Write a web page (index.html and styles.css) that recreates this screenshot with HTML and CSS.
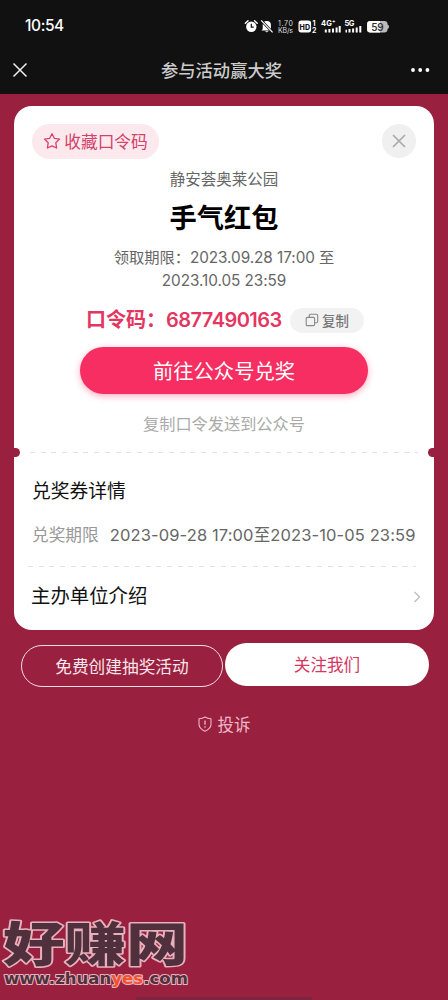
FILE: index.html
```html
<!DOCTYPE html>
<html lang="zh-CN">
<head>
<meta charset="utf-8">
<meta name="viewport" content="width=device-width, initial-scale=1">
<title>参与活动赢大奖</title>
<link rel="stylesheet" href="styles.css">
</head>
<body>
<div class="phone">
  <header class="topbar">
    <div class="status">
      <span class="clock">10:54</span>
      <svg class="status-icons" width="150" height="20" viewBox="0 0 150 20">
        <g fill="#fff">
          <circle cx="7.3" cy="10.8" r="5.2"/>
          <path d="M1.4 7.2 4 4.8M10.6 4.8l2.6 2.4" stroke="#fff" stroke-width="1.5" stroke-linecap="round"/>
          <path d="M7.3 7.8v3.3h2.4" fill="none" stroke="#111" stroke-width="1.2"/>
          <path d="M18.7 13.2V9a4.1 4.1 0 0 1 8.2 0v4.2l1.3 1.4H17.4zM21 15.2h3.6q-1.8 2-3.6 0z"/>
          <path d="M17.2 4.4 28.6 16.4" stroke="#111" stroke-width="2.6"/>
          <path d="M17.2 4.4 28.6 16.4" stroke="#fff" stroke-width="1.2"/>
          <text x="34" y="9.8" class="tiny" textLength="15">1.70</text>
          <text x="34" y="16.5" class="tiny" textLength="15">KB/s</text>
          <rect x="54.5" y="4.4" width="12.6" height="12" rx="2.6"/>
          <text x="55.6" y="13.6" class="hd" textLength="10.4" lengthAdjust="spacingAndGlyphs">HD</text>
          <text x="68.4" y="9.5" class="sim">1</text>
          <text x="68.1" y="17" class="sim">2</text>
          <text x="77" y="10" class="net" textLength="14.5">4G⁺</text>
          <text x="100.4" y="10" class="net" textLength="10">5G</text>
          <path d="M80.8 13.4h2v3h-2zM84.4 13h2v3.4h-2zM88 12.4h2v4h-2zM91.6 11.4h2v5h-2zM94.7 10h2v6.4h-2z"/>
          <path d="M101.5 13.8h1.5v2.6h-1.5zM104.5 13h2v3.4h-2zM108.1 12.4h2v4h-2zM111.7 11.4h2v5h-2zM115.3 10h2v6.4h-2z"/>
          <g transform="translate(4 0)">
            <path d="M122.3 5h14a3.2 3.2 0 0 1 3.2 3.2v.3q1.5.3 1.5 2.2t-1.5 2.2v.3a3.2 3.2 0 0 1-3.2 3.2h-14a3.2 3.2 0 0 1-3.2-3.2v-5A3.2 3.2 0 0 1 122.3 5z" fill="#bbb"/>
            <path d="M122.3 5h9.7v11.4h-9.7a3.2 3.2 0 0 1-3.2-3.2v-5A3.2 3.2 0 0 1 122.3 5z"/>
            <text x="123.2" y="14.5" class="battery" textLength="12.5">59</text>
          </g>
        </g>
      </svg>
    </div>
    <nav class="nav">
      <svg width="16" height="16" viewBox="0 0 16 16"><path d="M1.5 1.5l13 13M14.5 1.5l-13 13" stroke="#eee" stroke-width="1.5" fill="none"/></svg>
      <h1 class="nav-title">参与活动赢大奖</h1>
      <svg width="20" height="6" viewBox="0 0 20 6" fill="#fff"><circle cx="3" cy="3" r="1.9"/><circle cx="10.2" cy="3" r="1.9"/><circle cx="17.4" cy="3" r="1.9"/></svg>
    </nav>
  </header>

  <main class="page">
    <section class="card">
      <div class="card-head">
        <button class="favorite">
          <svg width="18" height="18" viewBox="0 0 18 18"><path d="M9 1.7 11.3 6.3 16.5 7.1 12.8 10.8 13.6 16 9 13.8 4.4 16 5.2 10.8 1.5 7.1 6.7 6.3z" fill="none" stroke="#d3426b" stroke-width="1.3" stroke-linejoin="round"/></svg>
          <span>收藏口令码</span>
        </button>
        <button class="close">
          <svg width="14" height="14" viewBox="0 0 14 14"><path d="M1.5 1.5l11 11M12.5 1.5l-11 11" stroke="#aaa" stroke-width="1.7" stroke-linecap="round"/></svg>
        </button>
      </div>
      <p class="merchant">静安荟奥莱公园</p>
      <h2 class="prize">手气红包</h2>
      <p class="period">领取期限：2023.09.28 17:00 至<br>2023.10.05 23:59</p>
      <div class="code-row">
        <strong class="code">口令码：<span class="code-number">6877490163</span></strong>
        <button class="copy">
          <svg width="14" height="14" viewBox="0 0 14 14" fill="none" stroke="#888" stroke-width="1.1"><rect x="1.2" y="4.4" width="8.4" height="8.2" rx="1.2"/><path d="M4.3 4.2V2.5q0-1.2 1.2-1.2h6q1.2 0 1.2 1.2v6q0 1.2-1.2 1.2H9.8"/></svg>
          <span>复制</span>
        </button>
      </div>
      <button class="redeem">前往公众号兑奖</button>
      <p class="hint">复制口令发送到公众号</p>
      <div class="tear">
        <i class="notch notch-left"></i>
        <div class="dashes"></div>
        <i class="notch notch-right"></i>
      </div>
      <h3 class="detail-title">兑奖券详情</h3>
      <div class="detail-row">
        <span class="detail-label">兑奖期限</span>
        <span class="detail-value">2023-09-28 17:00至2023-10-05 23:59</span>
      </div>
      <div class="dashes dashes-second"></div>
      <div class="organizer">
        <h3 class="organizer-title">主办单位介绍</h3>
        <svg width="8" height="12" viewBox="0 0 8 12"><path d="M1.5 1l5 5-5 5" fill="none" stroke="#bbb" stroke-width="1.3"/></svg>
      </div>
    </section>

    <div class="actions">
      <button class="create">免费创建抽奖活动</button>
      <button class="follow">关注我们</button>
    </div>
    <div class="report">
      <svg width="14" height="16" viewBox="0 0 14 16" fill="none" stroke="#efb9c8" stroke-width="1.1"><path d="M7 1Q9.5 2.6 13 2.7V8.5Q12.7 12.7 7 15.2 1.3 12.7 1 8.5V2.7Q4.5 2.6 7 1z" stroke-linejoin="round"/><path d="M7 4.5v4.3M7 10.3v1.4" stroke-width="1.3"/></svg>
      <span>投诉</span>
    </div>
  </main>

  <footer class="footer">
    <svg class="watermark" width="192" height="84" viewBox="0 0 192 84">
      <text class="brand" transform="translate(3 55) scale(1.31 1)" x="0" y="0">好赚网</text>
      <text class="site" x="4" y="77.5" textLength="184" lengthAdjust="spacingAndGlyphs">www.zhuan<tspan class="site-accent">yes</tspan>.com</text>
    </svg>
    <div class="home-bar"></div>
  </footer>
</div>
</body>
</html>
```

FILE: styles.css
```css
* { box-sizing: border-box; }

body {
  margin: 0;
  background: #9a203f;
  font-family: "Noto Sans", "Noto Sans CJK SC", sans-serif;
}

h1, h2, h3, p { margin: 0; font-weight: 400; }

button {
  display: flex;
  align-items: center;
  justify-content: center;
  padding: 0;
  border: 0;
  font-family: inherit;
  white-space: nowrap;
}

svg { display: block; flex: none; }

.phone {
  display: flex;
  flex-direction: column;
  width: 448px;
  height: 1000px;
  overflow: hidden;
}

.topbar { height: 94px; background: #111; }

.status {
  display: flex;
  align-items: center;
  justify-content: space-between;
  height: 46px;
  padding: 6px 54px 0 25px;
}

.clock {
  color: #fff;
  font: 500 15.5px/20px Inter, sans-serif;
  letter-spacing: -0.4px;
}

.tiny { font: 7px Inter, sans-serif; fill: #ddd; }
.hd { font: 800 7.5px Inter, sans-serif; fill: #111; }
.sim { font: 700 7px Inter, sans-serif; }
.net { font: 700 7.5px Inter, sans-serif; }
.battery { font: 600 10px Inter, sans-serif; fill: #333; }

.nav {
  display: flex;
  align-items: center;
  justify-content: space-between;
  height: 48px;
  padding: 0 18px 0 12px;
}

.nav-title {
  padding: 2px 0 0 5px;
  color: #ccc;
  font-size: 17.3px;
  font-weight: 500;
  line-height: 26px;
}

.page { padding: 12px 14px 0; }

.card {
  display: flex;
  flex-direction: column;
  height: 524px;
  padding: 18px 18px 0;
  border-radius: 18px;
  background: #fff;
}

.card-head { display: flex; justify-content: space-between; height: 35px; }

.favorite {
  gap: 3px;
  width: 127px;
  height: 35px;
  padding-bottom: 1px;
  border-radius: 18px;
  background: #fce9ee;
  color: #d3426b;
  font-size: 16.7px;
}

.close { width: 34px; height: 34px; border-radius: 50%; background: #f0f0f0; }

.merchant {
  margin-top: 8px;
  color: #666;
  font-size: 15.5px;
  line-height: 24px;
  text-align: center;
}

.prize {
  margin-top: 8px;
  color: #000;
  font-size: 27.2px;
  font-weight: 700;
  line-height: 38px;
  text-align: center;
}

.period {
  margin-top: 9px;
  color: #666;
  font-family: Inter, "Noto Sans CJK SC", sans-serif;
  font-size: 15.3px;
  letter-spacing: -0.05px;
  line-height: 23px;
  text-align: center;
}

.code-row {
  display: flex;
  align-items: center;
  gap: 8px;
  height: 28px;
  margin-top: 14px;
  padding-left: 54px;
}

.code {
  width: 196px;
  color: #e33762;
  font-size: 20px;
  font-weight: 700;
  line-height: 28px;
  white-space: nowrap;
}

.code-number {
  font-family: Inter, sans-serif;
  font-weight: 600;
  letter-spacing: -0.55px;
}

.copy {
  gap: 3px;
  width: 74px;
  height: 25px;
  padding-bottom: 1px;
  border-radius: 13px;
  background: #f2f2f2;
  color: #777;
  font-size: 13.4px;
  font-weight: 500;
}

.redeem {
  align-self: center;
  width: 288px;
  height: 47px;
  margin-top: 13px;
  padding-bottom: 2px;
  border-radius: 24px;
  background: #f62e61;
  box-shadow: 0 2px 7px rgba(246, 46, 97, 0.4);
  color: #fff;
  font-size: 20.3px;
}

.hint {
  margin-top: 18px;
  color: #aaa;
  font-size: 16.2px;
  line-height: 24px;
  text-align: center;
}

.tear {
  display: flex;
  align-items: center;
  justify-content: space-between;
  height: 10px;
  margin: 11px -18px 0;
}

.notch { width: 6px; height: 9px; background: #9a203f; }
.notch-left { border-radius: 0 5px 5px 0; }
.notch-right { border-radius: 5px 0 0 5px; }

.dashes {
  width: 388px;
  height: 1px;
  background: repeating-linear-gradient(90deg, #e2e2e2 0 5px, transparent 5px 10.7px);
}

.detail-title { margin-top: 20px; color: #111; font-size: 18.8px; line-height: 28px; }

.detail-row {
  display: flex;
  align-items: center;
  gap: 11px;
  height: 26px;
  margin-top: 16px;
  font-size: 16.7px;
  white-space: nowrap;
}

.detail-label { color: #999; }

.detail-value {
  color: #666;
  font-family: Inter, "Noto Sans CJK SC", sans-serif;
  font-size: 16.5px;
  letter-spacing: 0.12px;
}

.dashes-second { flex: none; margin: 19px 0 0 -4px; }

.organizer {
  display: flex;
  align-items: center;
  justify-content: space-between;
  height: 59px;
  margin: 0 -5px 0 -1px;
}

.organizer-title { margin-top: -4px; color: #111; font-size: 19.4px; }

.actions {
  display: flex;
  align-items: flex-start;
  gap: 2px;
  margin: 13px -9px 0 7px;
}

.create {
  width: 202px;
  height: 42px;
  margin-top: 2px;
  padding-bottom: 1px;
  border: 1.5px solid #f4dce3;
  border-radius: 22px;
  background: transparent;
  color: #f9e5eb;
  font-size: 16.7px;
}

.follow {
  width: 204px;
  height: 43px;
  padding-bottom: 1px;
  border-radius: 22px;
  background: #fff;
  color: #d3375f;
  font-size: 16.6px;
}

.report {
  display: flex;
  align-items: center;
  justify-content: center;
  gap: 6px;
  height: 24px;
  margin-top: 25px;
  color: #efb9c8;
  font-size: 16.5px;
}

.footer { margin-top: auto; }

.brand {
  font: 900 47px "Noto Sans CJK SC", sans-serif;
  fill: #50303c;
  stroke: #e6b1bd;
  stroke-width: 3px;
  stroke-linejoin: round;
  paint-order: stroke;
}

.site {
  font: 700 15px "DejaVu Sans", sans-serif;
  fill: #50303c;
  stroke: #e6b1bd;
  stroke-width: 2px;
  stroke-linejoin: round;
  paint-order: stroke;
}

.site-accent { fill: #f0522c; }

.home-bar { width: 176px; height: 3px; margin: 7px auto 0; background: #7d2540; }
```
